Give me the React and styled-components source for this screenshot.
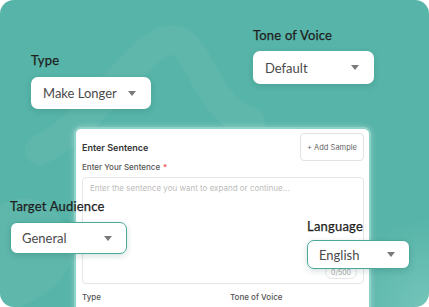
import React from "react";
import styled, { createGlobalStyle } from "styled-components";

const GlobalStyle = createGlobalStyle`
  html, body {
    margin: 0;
    padding: 0;
    background: #ffffff;
  }
  body {
    font-family: "Inter", "Noto Sans", sans-serif;
  }
`;

const Panel = styled.div`
  position: relative;
  width: 429px;
  height: 307px;
  border-radius: 14px;
  overflow: hidden;
  background:
    radial-gradient(circle at 100% 100%, rgba(140, 210, 200, 0.55) 0, rgba(140, 210, 200, 0) 90px),
    #57b4a8;
`;

const Decor = styled.svg`
  position: absolute;
  left: 0;
  top: 0;
  width: 429px;
  height: 307px;
  pointer-events: none;
`;

const Content = styled.div`
  position: relative;
  display: flex;
  flex-direction: column;
`;

const TopRow = styled.div`
  display: flex;
  align-items: flex-start;
  padding-left: 31px;
  gap: 102px;
`;

const Field = styled.div`
  display: flex;
  flex-direction: column;
  gap: ${(p) => p.$gap || 8}px;
  margin-top: ${(p) => p.$top || 0}px;
`;

const BigLabel = styled.div`
  font-family: "Lato", "Noto Sans", sans-serif;
  font-size: 13px;
  line-height: 16px;
  font-weight: 400;
  color: #1e1e1e;
  letter-spacing: 0.2px;
  -webkit-text-stroke: 0.25px #1e1e1e;
`;

const Select = styled.div`
  box-sizing: border-box;
  width: ${(p) => p.$w}px;
  height: ${(p) => p.$h || 32}px;
  display: flex;
  align-items: center;
  justify-content: space-between;
  padding: 0 14px 0 11px;
  background: #fff;
  border-radius: 7px;
  border: 1px solid ${(p) => (p.$outlined ? "#4aa99b" : "transparent")};
  box-shadow: 0 2px 6px rgba(20, 80, 70, 0.18);
  font-family: "Lato", "Noto Sans", sans-serif;
  font-size: 13px;
  color: #4a4a4a;
`;

const Caret = styled.span`
  width: 0;
  height: 0;
  border-left: 4px solid transparent;
  border-right: 4px solid transparent;
  border-top: 5px solid #7a7a7a;
`;

const Card = styled.div`
  box-sizing: border-box;
  margin: 18px 0 0 74px;
  width: 297px;
  height: 200px;
  background: #fff;
  border: 2px solid #8fd2c8;
  border-bottom: none;
  border-radius: 7px 7px 0 0;
  padding: 4px 5px 0 6px;
  box-shadow: 0 0 6px rgba(255, 255, 255, 0.35);
`;

const CardHeader = styled.div`
  display: flex;
  align-items: center;
  justify-content: space-between;
  height: 28px;
`;

const CardTitle = styled.div`
  font-size: 9px;
  font-weight: 600;
  color: #333;
`;

const AddButton = styled.div`
  box-sizing: border-box;
  height: 28px;
  width: 64px;
  display: flex;
  align-items: center;
  justify-content: center;
  border: 1px solid #e2e2e2;
  border-radius: 4px;
  font-size: 7.5px;
  color: #666;
`;

const SmallLabel = styled.div`
  font-size: 8px;
  font-weight: 500;
  color: #555;
  line-height: 10px;
  margin-top: ${(p) => p.$top || 0}px;
`;

const Star = styled.span`
  color: #e53935;
  margin-left: 3px;
`;

const TextBox = styled.div`
  position: relative;
  box-sizing: border-box;
  margin-top: 5px;
  width: 282px;
  height: 107px;
  border: 1px solid #e6e6e6;
  border-radius: 4px;
  padding: 5px 7px;
  font-size: 8px;
  color: #bcbcbc;
`;

const Counter = styled.div`
  position: absolute;
  right: 6px;
  bottom: 4px;
  padding: 1px 5px;
  border: 1px solid #e6e6e6;
  border-radius: 10px;
  font-size: 7px;
  color: #aaa;
`;

const BottomRow = styled.div`
  display: grid;
  grid-template-columns: 148px 1fr;
  margin-top: 8px;
`;

const Floating = styled.div`
  position: absolute;
  left: ${(p) => p.$x}px;
  top: ${(p) => p.$y}px;
`;

export default function App() {
  return (
    <>
      <GlobalStyle />
      <Panel>
        <Decor viewBox="0 0 429 307">
          <path
            d="M40 150 C100 120 140 40 172 40 C200 40 205 110 250 122"
            fill="none"
            stroke="rgba(255,255,255,0.05)"
            strokeWidth="30"
            strokeLinecap="round"
          />
          <path
            d="M-20 220 C20 180 60 200 70 240 C80 280 40 300 -10 320 Z"
            fill="rgba(255,255,255,0.05)"
          />
        </Decor>
        <Content>
          <TopRow>
            <Field $top={52} $gap={9}>
              <BigLabel>Type</BigLabel>
              <Select $w={120}>
                Make Longer <Caret />
              </Select>
            </Field>
            <Field $top={27} $gap={8}>
              <BigLabel>Tone of Voice</BigLabel>
              <Select $w={121} $h={33}>
                Default <Caret />
              </Select>
            </Field>
          </TopRow>
          <Card>
            <CardHeader>
              <CardTitle>Enter Sentence</CardTitle>
              <AddButton>+ Add Sample</AddButton>
            </CardHeader>
            <SmallLabel $top={1}>
              Enter Your Sentence<Star>*</Star>
            </SmallLabel>
            <TextBox>
              Enter the sentence you want to expand or continue...
              <Counter>0/500</Counter>
            </TextBox>
            <BottomRow>
              <SmallLabel>Type</SmallLabel>
              <SmallLabel>Tone of Voice</SmallLabel>
            </BottomRow>
          </Card>
        </Content>
        <Floating $x={10} $y={198}>
          <Field $gap={8}>
            <BigLabel>Target Audience</BigLabel>
            <Select $w={117} $outlined>
              General <Caret />
            </Select>
          </Field>
        </Floating>
        <Floating $x={307} $y={218}>
          <Field $gap={6}>
            <BigLabel>Language</BigLabel>
            <Select $w={103} $h={29} $outlined>
              English <Caret />
            </Select>
          </Field>
        </Floating>
      </Panel>
    </>
  );
}
